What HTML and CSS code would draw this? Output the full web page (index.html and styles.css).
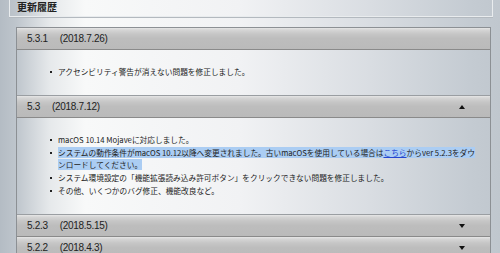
FILE: index.html
```html
<!DOCTYPE html>
<html lang="ja">
<head>
    <meta charset="UTF-8">
    <title>更新履歴</title>
    <link rel="stylesheet" href="styles.css">
</head>
<body>
    <div class="title">更新履歴</div>

    <div class="panel">
        <div class="head">
            <span class="ver">5.3.1<span class="date">(2018.7.26)</span></span>
        </div>
        <div class="notes">
            <ul>
                <li>アクセシビリティ警告が消えない問題を修正しました。</li>
            </ul>
        </div>

        <div class="head">
            <span class="ver">5.3<span class="date">(2018.7.12)</span></span>
            <span class="arrow up"></span>
        </div>
        <div class="notes">
            <ul>
                <li>macOS 10.14 Mojaveに対応しました。</li>
                <li><span class="sel">システムの動作条件がmacOS 10.12以降へ変更されました。古いmacOSを使用している場合は<a href="#">こちら</a>からver 5.2.3をダウンロードしてください。</span></li>
                <li>システム環境設定の「機能拡張読み込み許可ボタン」をクリックできない問題を修正しました。</li>
                <li>その他、いくつかのバグ修正、機能改良など。</li>
            </ul>
        </div>

        <div class="head">
            <span class="ver">5.2.3<span class="date">(2018.5.15)</span></span>
            <span class="arrow down"></span>
        </div>
        <div class="head">
            <span class="ver">5.2.2<span class="date">(2018.4.3)</span></span>
            <span class="arrow down"></span>
        </div>
    </div>
</body>
</html>
```

FILE: styles.css
```css
html, body {
    height: 100%;
}
body {
    margin: 0;
    overflow: hidden;
    font-family: "Noto Sans CJK JP", sans-serif;
    color: #222;
    background: linear-gradient(90deg, #b4bcc4 0, #bec5cc 16px, #e6e9eb 50px, #f8f9f9 85px, #f1f2f4 240px, #d9dde2 370px, #c4cbd2 470px, #c0c7ce 500px);
}

.title {
    margin: 0 7px 10px 9px;
    height: 16px;
    padding-left: 7px;
    border: 1px solid #e9ecee;
    border-top: none;
    box-shadow: 0 1px 0 #b3b9bf;
    font-size: 10px;
    font-weight: bold;
    line-height: 14px;
}

.panel {
    margin: 0 9px 0 16px;
    border: 1px solid #8c9094;
    border-bottom: none;
}

.head {
    display: flex;
    justify-content: space-between;
    align-items: center;
    height: 21px;
    padding: 0 25px 0 10px;
    border-bottom: 1px solid #8a8a8a;
    background: linear-gradient(#e6e6e6 0, #d5d5d5 2px, #c6c6c6 6px, #bdbdbd 50%, #bababa 100%);
    font-family: "Liberation Sans", Arial, sans-serif;
    font-size: 10px;
    letter-spacing: -0.3px;
    color: #222;
}
.head .date {
    margin-left: 12px;
}

.arrow {
    width: 0;
    height: 0;
    border-left: 3px solid transparent;
    border-right: 3px solid transparent;
}
.arrow.up {
    border-bottom: 4px solid #111;
}
.arrow.down {
    border-top: 4px solid #111;
}

.notes {
    padding: 16px 12px 17px 41px;
    border-bottom: 1px solid #9a9ea2;
}
.notes ul {
    margin: 0;
    padding: 0;
    list-style: none;
}
.notes li {
    position: relative;
    font-size: 7.7px;
    line-height: 12px;
    margin-bottom: 1px;
}
.notes li:last-child {
    margin-bottom: 0;
}
.notes li::before {
    content: "";
    position: absolute;
    left: -8px;
    top: 5px;
    width: 2px;
    height: 2px;
    background: #222;
}

.sel {
    background: #abcdf3;
}
.sel a {
    color: #2446d0;
}
```
